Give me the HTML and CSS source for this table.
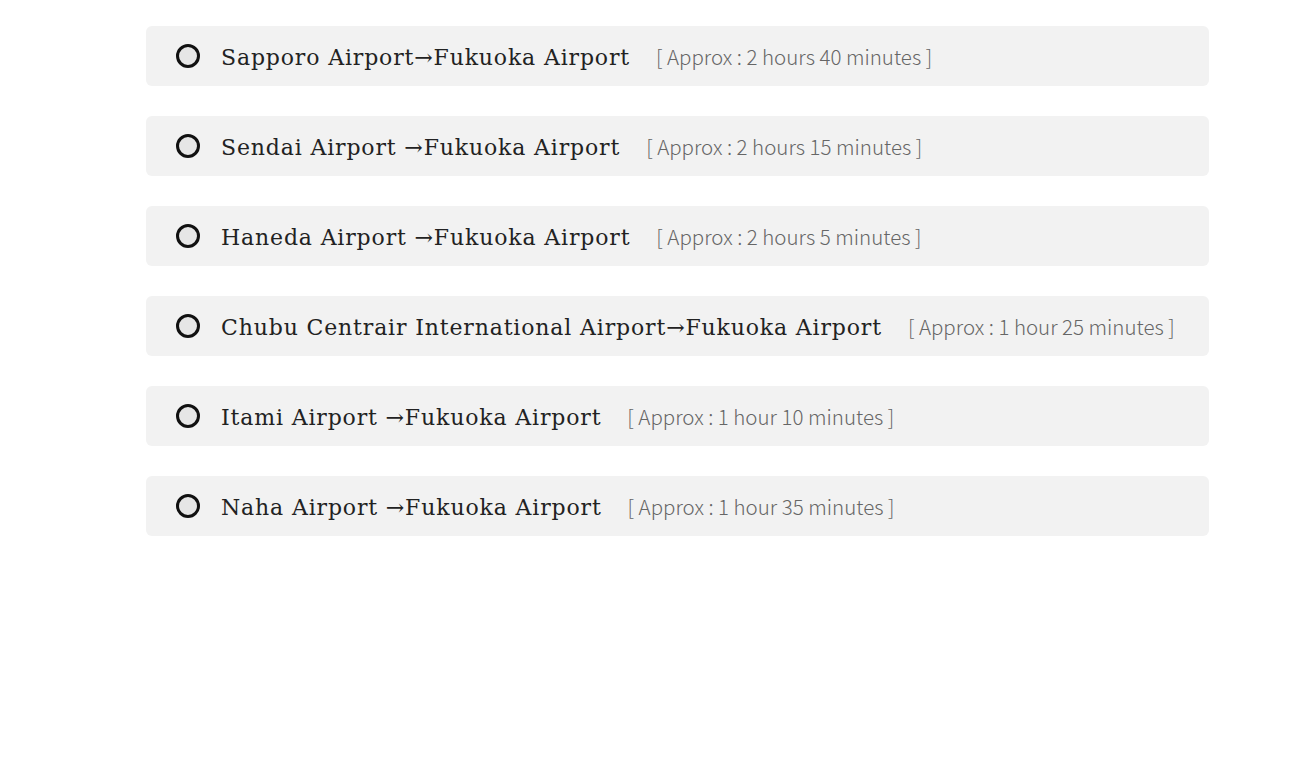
FILE: index.html
```html
<!DOCTYPE html>
<html lang="en">
<head>
<meta charset="utf-8">
<link rel="stylesheet" href="styles.css">
</head>
<body>
<ul class="routes">
  <li class="route"><span class="dot"></span><p class="label"><span class="name">Sapporo Airport→Fukuoka Airport</span><span class="time">[ Approx : 2 hours 40 minutes ]</span></p></li>
  <li class="route"><span class="dot"></span><p class="label"><span class="name">Sendai Airport →Fukuoka Airport</span><span class="time">[ Approx : 2 hours 15 minutes ]</span></p></li>
  <li class="route"><span class="dot"></span><p class="label"><span class="name">Haneda Airport →Fukuoka Airport</span><span class="time">[ Approx : 2 hours 5 minutes ]</span></p></li>
  <li class="route"><span class="dot"></span><p class="label"><span class="name">Chubu Centrair International Airport→Fukuoka Airport</span><span class="time">[ Approx : 1 hour 25 minutes ]</span></p></li>
  <li class="route"><span class="dot"></span><p class="label"><span class="name">Itami Airport →Fukuoka Airport</span><span class="time">[ Approx : 1 hour 10 minutes ]</span></p></li>
  <li class="route"><span class="dot"></span><p class="label"><span class="name">Naha Airport →Fukuoka Airport</span><span class="time">[ Approx : 1 hour 35 minutes ]</span></p></li>
</ul>
</body>
</html>
```
FILE: styles.css
```css
html, body {
  margin: 0;
  padding: 0;
  background: #fff;
}
.routes {
  list-style: none;
  margin: 0;
  padding: 26px 95px 0 146px;
  display: flex;
  flex-direction: column;
  gap: 30px;
}
.route {
  height: 60px;
  background: #f2f2f2;
  border-radius: 6px;
  display: flex;
  align-items: center;
  padding-left: 30px;
}
.dot {
  width: 18px;
  height: 18px;
  border: 3px solid #111;
  border-radius: 50%;
  background: #e6e6e6;
  flex: none;
}
.label {
  margin: 3px 0 0 21px;
  line-height: 30px;
  white-space: nowrap;
}
.name {
  font-family: "DejaVu Serif", "Liberation Serif", serif;
  font-size: 22px;
  letter-spacing: 0.85px;
  color: #222;
}
.time {
  margin-left: 26px;
  font-family: "Noto Sans CJK JP", "Noto Sans", sans-serif;
  font-weight: 300;
  font-size: 20.5px;
  color: #666;
}
```
